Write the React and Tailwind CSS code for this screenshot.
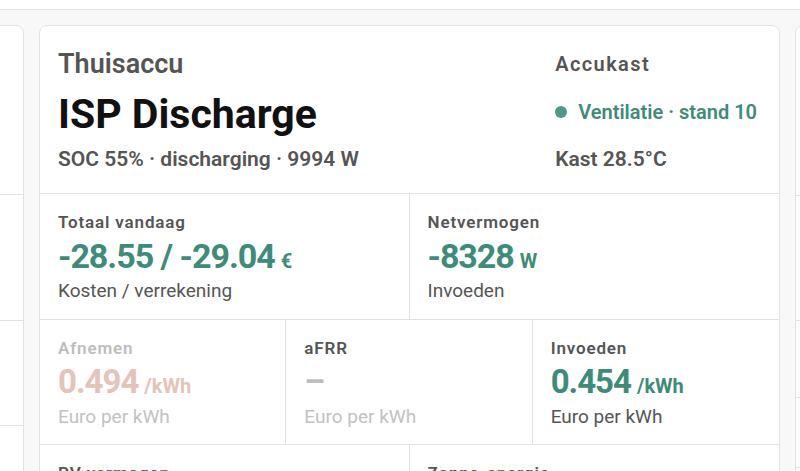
import React from "react";

const font = { fontFamily: "Roboto, 'Noto Sans', Arial, sans-serif" };

function Stat({ label, value, unit, sub, tone = "normal", border = false, valueSize = "text-[34px]" }) {
  const labelC = tone === "muted" ? "text-[#bdbdbd]" : "text-[#555555]";
  const valueC =
    tone === "muted" ? "text-[#e5c3b8]" : tone === "dash" ? "text-[#bdbdbd]" : "text-[#3d8c79]";
  const subC = tone === "normal" ? "text-[#555555]" : "text-[#c2c2c2]";
  return (
    <div className={`pl-[18px] pr-[12px] pt-[18px] ${border ? "border-r border-[#e2e2e2]" : ""}`}>
      <div className={`text-[17px] leading-[20px] font-semibold tracking-[0.05em] ${labelC}`}>{label}</div>
      <div className={`mt-[4px] flex items-baseline h-[40px] ${valueC}`}>
        <span className={`${valueSize} leading-[40px] font-bold tracking-[-0.03em]`}>{value}</span>
        {unit && <span className="ml-[6px] text-[20px] font-bold">{unit}</span>}
      </div>
      <div className={`mt-[4px] text-[19px] leading-[22px] ${subC}`}>{sub}</div>
    </div>
  );
}

export default function App() {
  return (
    <div style={font} className="w-[800px] h-[471px] overflow-hidden bg-[#f8f8f8]">
      <div className="h-[10px] bg-white border-b border-[#e3e3e3]" />
      <div className="flex gap-[15px] ml-[-717px] pt-[15px]">
        {/* left card (offscreen) */}
        <div className="w-[741px] shrink-0 h-[500px] bg-white border border-[#e2e2e2] rounded-lg">
          <div className="h-[169px] border-b border-[#e2e2e2]" />
          <div className="h-[126px] border-b border-[#e2e2e2]" />
          <div className="h-[105px] border-b border-[#e2e2e2]" />
        </div>

        {/* main card */}
        <div className="w-[741px] shrink-0 h-[500px] bg-white border border-[#e2e2e2] rounded-lg">
          <div className="flex justify-between pl-[18px] pr-[22px] pt-[22px] pb-[22px] border-b border-[#e2e2e2]">
            <div>
              <div className="text-[27px] leading-[32px] font-semibold text-[#555555]">Thuisaccu</div>
              <div className="mt-[10px] text-[41px] leading-[48px] font-bold text-[#111111]">ISP Discharge</div>
              <div className="mt-[9px] text-[21px] leading-[24px] font-semibold text-[#555555]">
                SOC 55% · discharging · 9994 W
              </div>
            </div>
            <div className="mt-[4px]">
              <div className="text-[20px] leading-[24px] font-semibold tracking-[0.07em] text-[#555555]">Accukast</div>
              <div className="mt-[23px] flex items-center gap-[11px] h-[26px]">
                <span className="w-[12px] h-[12px] rounded-full bg-[#4a9a88]" />
                <span className="text-[20px] leading-[26px] font-semibold text-[#3d8c79]">Ventilatie · stand 10</span>
              </div>
              <div className="mt-[22px] text-[21px] leading-[24px] font-semibold text-[#555555]">Kast 28.5°C</div>
            </div>
          </div>

          <div className="grid grid-cols-2 border-b border-[#e2e2e2] h-[126px]">
            <Stat label="Totaal vandaag" value="-28.55 / -29.04" unit="€" sub="Kosten / verrekening" border />
            <Stat label="Netvermogen" value="-8328" unit="W" sub="Invoeden" />
          </div>

          <div className="grid grid-cols-3 border-b border-[#e2e2e2] h-[125px]">
            <Stat label="Afnemen" value="0.494" unit="/kWh" sub="Euro per kWh" tone="muted" border valueSize="text-[33px]" />
            <Stat label="aFRR" value="–" sub="Euro per kWh" tone="dash" border valueSize="text-[33px]" />
            <Stat label="Invoeden" value="0.454" unit="/kWh" sub="Euro per kWh" valueSize="text-[33px]" />
          </div>

          <div className="grid grid-cols-2">
            <div className="pl-[18px] pt-[18px] border-r border-[#e2e2e2] h-[80px]">
              <div className="text-[17px] leading-[20px] font-semibold tracking-[0.05em] text-[#555555]">PV vermogen</div>
            </div>
            <div className="pl-[18px] pt-[18px]">
              <div className="text-[17px] leading-[20px] font-semibold tracking-[0.05em] text-[#555555]">Zonne-energie</div>
            </div>
          </div>
        </div>

        {/* right card (offscreen) */}
        <div className="w-[741px] shrink-0 h-[500px] bg-white border border-[#e2e2e2] rounded-lg">
          <div className="h-[170px] border-b border-[#e2e2e2]" />
          <div className="h-[125px] border-b border-[#e2e2e2]" />
          <div className="h-[77px] border-b border-[#e2e2e2]" />
          <div className="h-[70px] border-b border-[#e2e2e2]" />
        </div>
      </div>
    </div>
  );
}
